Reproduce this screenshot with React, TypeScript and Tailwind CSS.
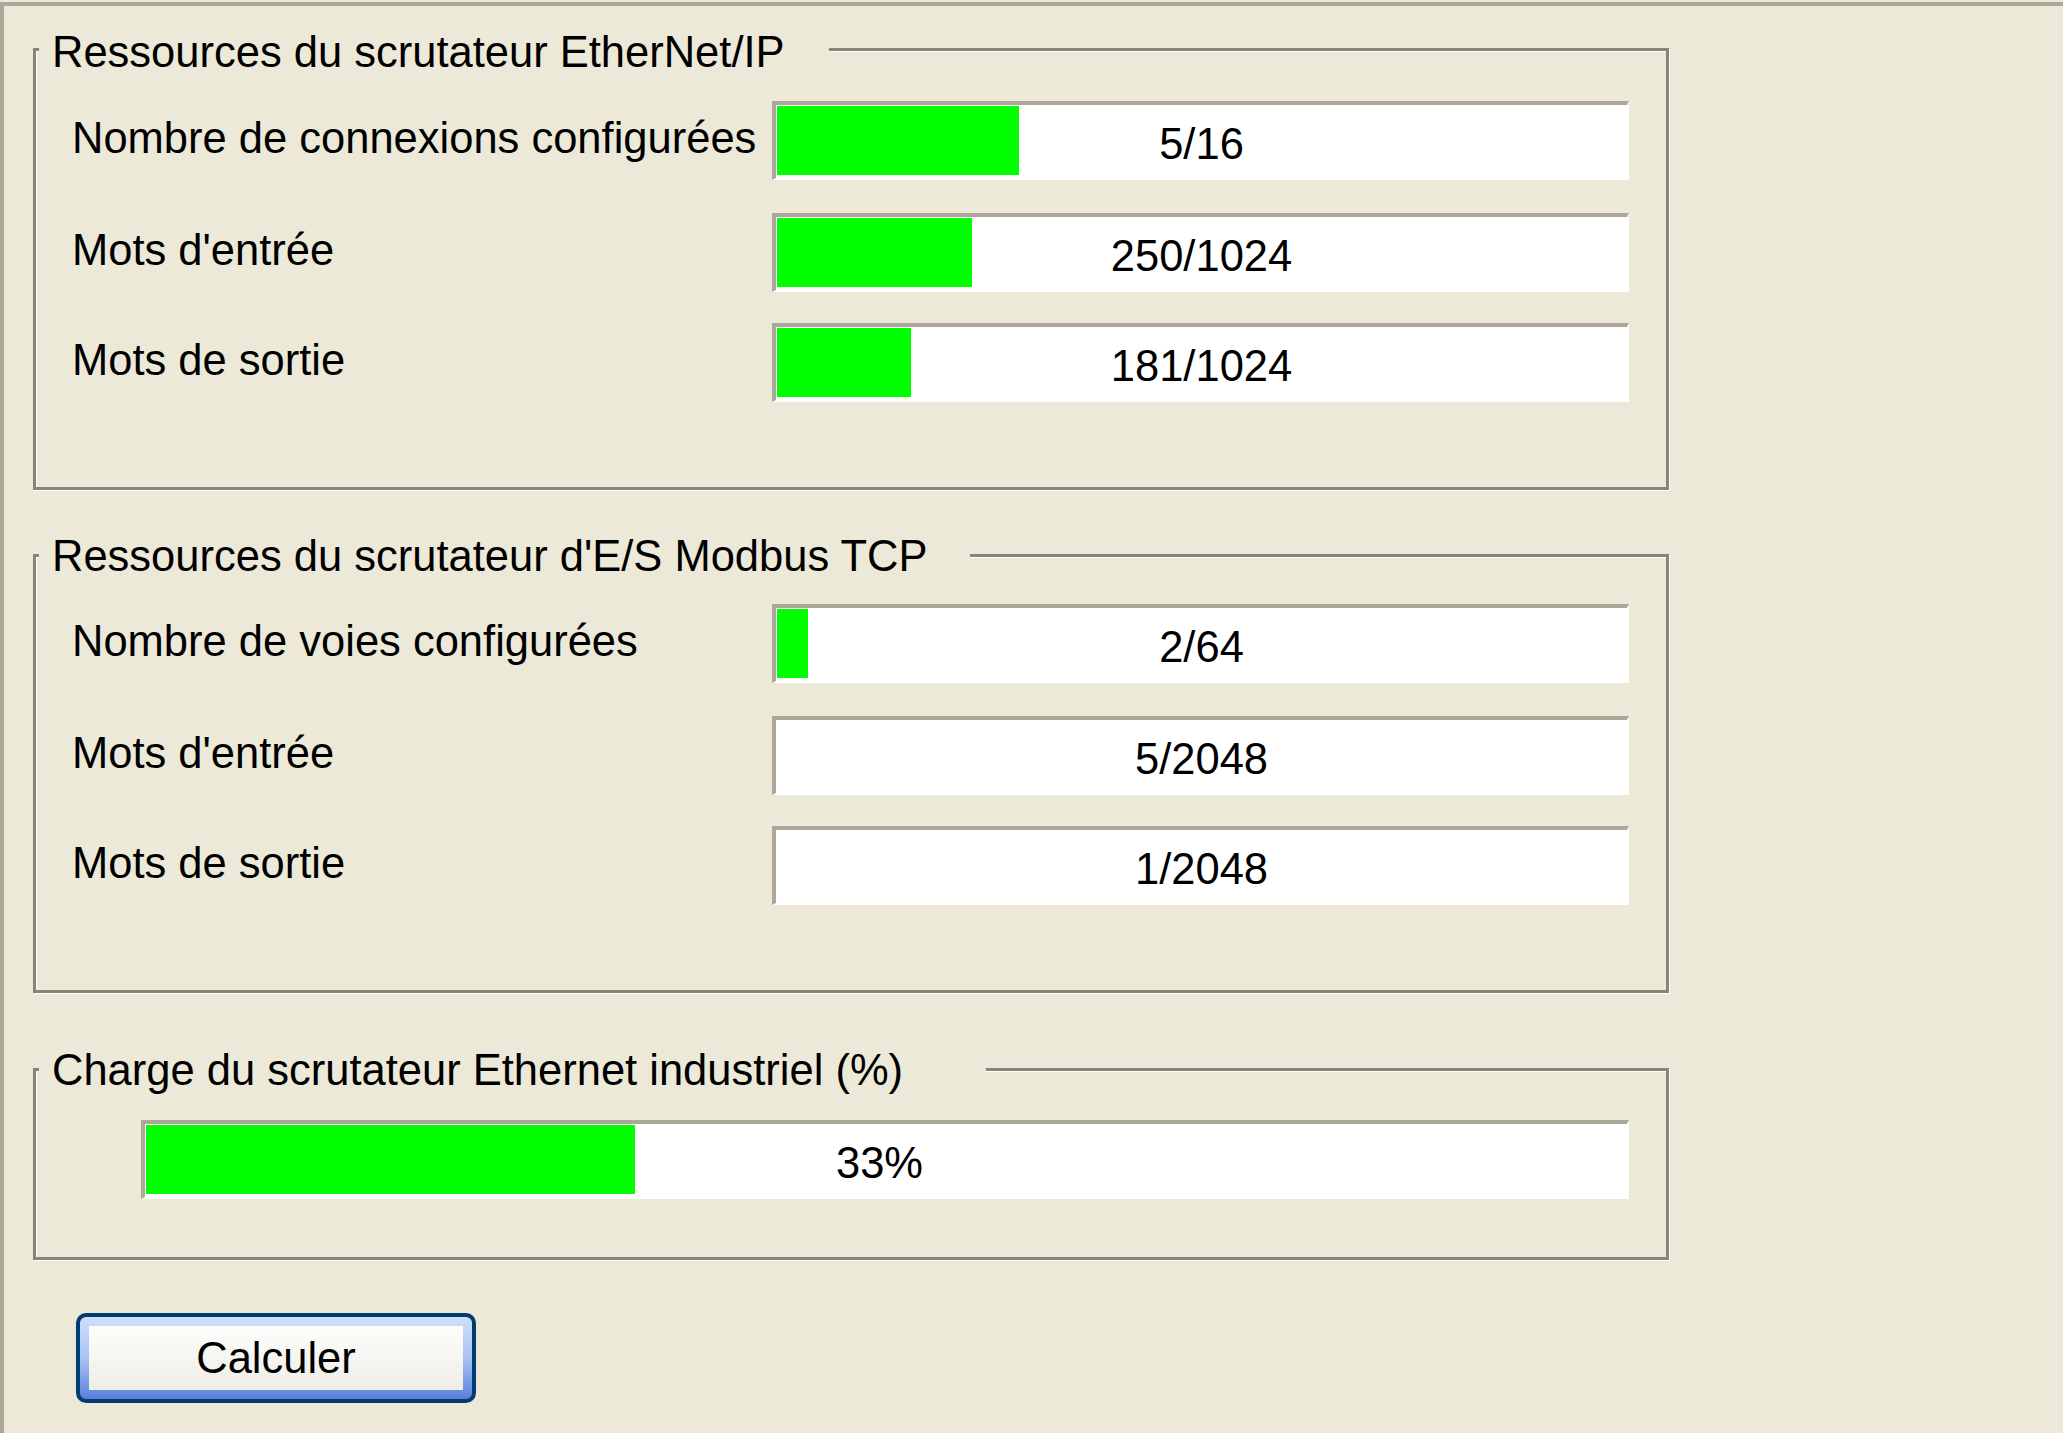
import React from "react";

type Row = { label: string; value: string; fill: number };

const ethernetIp: Row[] = [
  { label: "Nombre de connexions configurées", value: "5/16", fill: 242 },
  { label: "Mots d'entrée", value: "250/1024", fill: 195 },
  { label: "Mots de sortie", value: "181/1024", fill: 134 },
];

const modbus: Row[] = [
  { label: "Nombre de voies configurées", value: "2/64", fill: 31 },
  { label: "Mots d'entrée", value: "5/2048", fill: 0 },
  { label: "Mots de sortie", value: "1/2048", fill: 0 },
];

// spacing above each row, first one sits on the group padding
const rowGap = ["mt-0", "mt-[33px]", "mt-[31px]"];

const Bar = ({
  value,
  fill,
  className,
  textClass = "",
}: {
  value: string;
  fill: number;
  className: string;
  textClass?: string;
}) => (
  <div
    className={`relative h-[79px] shrink-0 border-t-4 border-r-2 border-b-2 border-l-4 border-t-[#ACA899] border-r-white border-b-white border-l-[#ACA899] bg-white pt-px pl-px ${className}`}
  >
    {fill > 0 && <div className="h-[69px] bg-[#00FF00]" style={{ width: fill }} />}
    <div className={`absolute inset-0 flex items-center justify-center pt-[5px] whitespace-nowrap ${textClass}`}>
      {value}
    </div>
  </div>
);

const Rows = ({ rows }: { rows: Row[] }) => (
  <div className="flex flex-col pl-[36px]">
    {rows.map((r, i) => (
      <div key={r.label + r.value} className={`flex h-[79px] ${rowGap[i]}`}>
        <div className="mt-[12px] w-[700px] whitespace-nowrap">{r.label}</div>
        <Bar value={r.value} fill={r.fill} className="w-[857px]" />
      </div>
    ))}
  </div>
);

const groupBox =
  "ml-[29px] w-[1636px] border-[3px] border-[#878478] shadow-[inset_1px_1px_0_#fff,1px_1px_0_#fff]";

export default function App() {
  return (
    <div className="min-h-screen bg-white">
      <div className="h-[1433px] w-[2063px] bg-[#ECE9D8] pt-[2px] font-['Liberation_Sans',Arial,sans-serif] text-[43.5px] leading-[50px] text-black">
        <div className="h-full border-t-4 border-l-4 border-[#ACA899]">
          <fieldset className={`${groupBox} mt-[16.5px] pt-[24.5px] pb-[85px]`}>
            <legend className="ml-[3px] bg-[#ECE9D8] pt-[4px] pr-[44px] pl-[13px] whitespace-nowrap">
              Ressources du scrutateur EtherNet/IP
            </legend>
            <Rows rows={ethernetIp} />
          </fieldset>

          <fieldset className={`${groupBox} mt-[40.5px] pt-[23.5px] pb-[85px]`}>
            <legend className="ml-[3px] bg-[#ECE9D8] pr-[43px] pl-[13px] whitespace-nowrap">
              Ressources du scrutateur d'E/S Modbus TCP
            </legend>
            <Rows rows={modbus} />
          </fieldset>

          <fieldset className={`${groupBox} mt-[51.5px] pt-[25.5px] pb-[58px]`}>
            <legend className="ml-[3px] bg-[#ECE9D8] pr-[83px] pl-[13px] whitespace-nowrap">
              Charge du scrutateur Ethernet industriel (%)
            </legend>
            <div className="pl-[105px]">
              <Bar value="33%" fill={489} className="w-[1488px]" textClass="pr-[13px]" />
            </div>
          </fieldset>

          <button className="mt-[53px] ml-[72px] block h-[90px] w-[400px] rounded-[10px] border-4 border-[#003C74] bg-linear-to-b from-[#CFE0FA] via-[#A9C3F2] to-[#5B7EDB] p-[9px]">
            <div className="flex h-full w-full items-center justify-center bg-linear-to-b from-[#FDFDFB] to-[#EEEDE7]">
              Calculer
            </div>
          </button>
        </div>
      </div>
    </div>
  );
}
